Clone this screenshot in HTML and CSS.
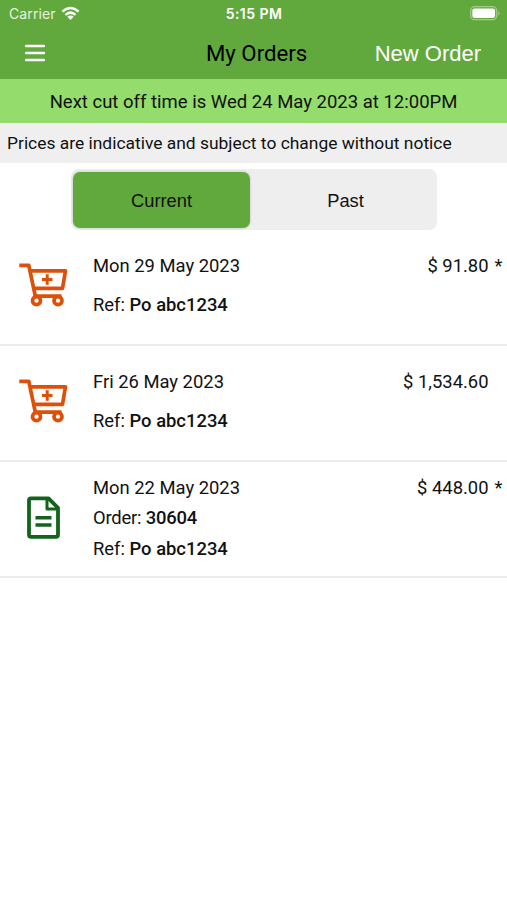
FILE: index.html
```html
<!DOCTYPE html>
<html lang="en">
<head>
<meta charset="utf-8">
<title>My Orders</title>
<link rel="stylesheet" href="styles.css">
</head>
<body>
<svg class="defs" aria-hidden="true">
  <symbol id="cart" viewBox="0 0 50 46">
    <g fill="none" stroke="currentColor" stroke-width="3.7" stroke-linejoin="round">
      <path d="M1.300 3.300H10.800L17.300 34.200H43.500"/>
      <path d="M12 8.800H47.500L44.500 26.300H15.500"/>
      <path d="M24 17.500H34.500M29.200 12.200V22.800" stroke-width="3"/>
      <circle cx="18.500" cy="38.700" r="4"/>
      <circle cx="40" cy="38.700" r="4"/>
    </g>
  </symbol>
</svg>
<header class="top">
  <div class="status">
    <div class="carrier"><span>Carrier</span>
      <svg class="wifi" viewBox="0 0 20 15"><g fill="none" stroke="#fff" stroke-width="2.6"><path d="M1.500 5.500Q10-2.200 18.500 5.500"/><path d="M4.700 9Q10 4.200 15.300 9"/></g><path d="M6.700 11Q10 8.300 13.300 11L10 14.300Z" fill="#fff"/></svg>
    </div>
    <div class="clock">5:15 PM</div>
    <svg class="battery" viewBox="0 0 31 15"><rect x=".7" y=".7" width="26" height="13" rx="4" fill="none" stroke="#a2cc88" stroke-width="1.3"/><rect x="2.300" y="2.400" width="22.800" height="9.600" rx="2.300" fill="#fff"/><path d="M28.400 5Q31 7.200 28.400 9.500Z" fill="#a2cc88"/></svg>
  </div>
  <nav class="bar">
    <svg class="menu" viewBox="0 0 20 18"><path d="M1 2H19M1 9H19M1 16H19" stroke="#fff" stroke-width="2.5" stroke-linecap="round"/></svg>
    <h1>My Orders</h1>
    <a class="new">New Order</a>
  </nav>
</header>
<div class="cutoff"><span>Next cut off time is Wed 24 May 2023 at 12:00PM</span></div>
<div class="notice"><span>Prices are indicative and subject to change without notice</span></div>
<div class="tabs"><div class="tab active">Current</div><div class="tab">Past</div></div>
<main>
  <article class="order">
    <svg class="icon"><use href="#cart"/></svg>
    <div class="info"><p>Mon 29 May 2023</p><p>Ref: <b>Po abc1234</b></p></div>
    <div class="price">$ 91.80</div><div class="star">*</div>
  </article>
  <article class="order">
    <svg class="icon"><use href="#cart"/></svg>
    <div class="info"><p>Fri 26 May 2023</p><p>Ref: <b>Po abc1234</b></p></div>
    <div class="price">$ 1,534.60</div><div class="star"></div>
  </article>
  <article class="order compact">
    <svg class="icon" viewBox="0 0 50 46"><g fill="none" stroke="currentColor" stroke-width="3.800" stroke-linejoin="round"><path d="M13 3.300H30.500L40 12.800V39.800Q40 41.800 38 41.800H13Q11 41.800 11 39.800V5.300Q11 3.300 13 3.300Z"/><path d="M29 4V14H39.500" stroke-width="3"/><path d="M17.500 22.800H33.500M17.500 30H33.500" stroke-width="3.400"/></g></svg>
    <div class="info"><p>Mon 22 May 2023</p><p class="number">Order: <b>30604</b></p><p>Ref: <b>Po abc1234</b></p></div>
    <div class="price">$ 448.00</div><div class="star">*</div>
  </article>
</main>
</body>
</html>
```

FILE: styles.css
```css
* { box-sizing: border-box; }
body { margin: 0; min-height: 900px; background: #fff; color: #111; font-family: Roboto, sans-serif; font-size: 18.4px; }
.defs { display: block; width: 0; height: 0; }
h1, p { margin: 0; font-weight: 400; }
.top { height: 79px; background: #62a93d; }
.status { height: 27px; display: grid; grid-template-columns: 1fr auto 1fr; align-items: center; padding: 0 6px 0 9px; color: #fff; font: 14px/27px Inter, sans-serif; }
.carrier { display: flex; align-items: center; gap: 5px; color: #e6f3df; letter-spacing: .1px; }
.wifi { width: 19px; height: 15px; margin-top: -1px; }
.clock { font-weight: 600; font-size: 14px; letter-spacing: .45px; margin-right: 2px; }
.battery { width: 31px; height: 15px; justify-self: end; }
.bar { height: 51px; display: grid; grid-template-columns: 181px auto 1fr; align-items: center; padding: 0 26px 0 25px; }
.menu { width: 20px; height: 18px; }
h1 { font-size: 22.2px; line-height: 51px; color: #000; }
.new { justify-self: end; color: #fff; font: 22px/51px "Liberation Sans", sans-serif; padding-top: 1px; }
.cutoff { height: 44px; line-height: 46px; background: #94dc6c; text-align: center; white-space: nowrap; font-size: 18.5px; }
.notice { height: 40px; line-height: 41px; background: #efefef; padding-left: 7px; font-size: 17.42px; white-space: nowrap; }
.tabs { display: flex; width: 366px; height: 61px; margin: 6px 0 0 71px; padding: 3px 2px; border-radius: 8px; background: #eee; font: 18.3px/56px "Liberation Sans", sans-serif; }
.tab { flex: 1; height: 56px; line-height: 57px; text-align: center; }
.tab + .tab { padding-left: 6px; }
.active { flex: 0 0 177px; background: #62a93d; border-radius: 7px; box-shadow: 0 0 3px #0003; }
.order { height: 116px; display: flex; align-items: flex-start; border-bottom: 2px solid #ececec; padding-left: 18px; }
.icon { width: 50px; height: 46px; margin-top: 32px; flex: none; color: #dc5009; }
.info { flex: 1; margin-left: 25px; padding-top: 16px; line-height: 39px; }
.info b { font-weight: 500; }
.price { padding-top: 16px; line-height: 39px; font-size: 18.4px; }
.star { width: 18.500px; padding: 16px 0 0 6px; line-height: 39px; }
.compact .icon { color: #12641b; margin-top: 33px; }
.compact .info { line-height: 30.400px; padding-top: 11px; }
.compact .number { letter-spacing: -.2px; }
.compact .price, .compact .star { line-height: 30.5px; padding-top: 11px; }
```
